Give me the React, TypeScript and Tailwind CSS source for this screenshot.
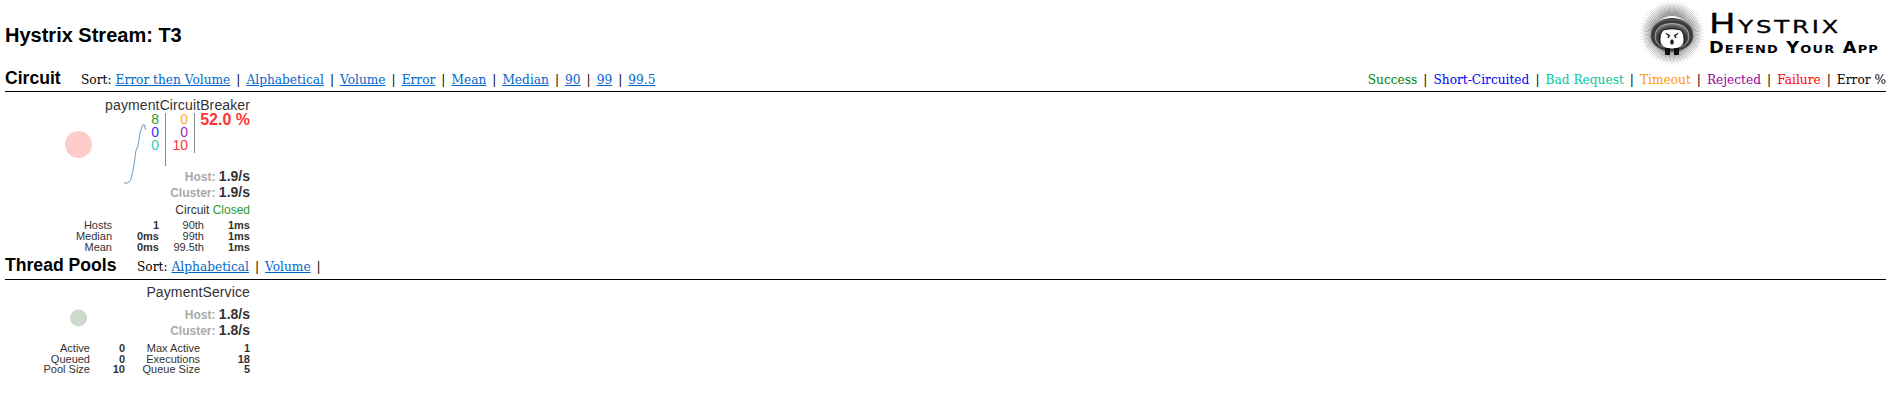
import React from "react";

const sans = "font-['Liberation_Sans',Arial,sans-serif]";
const serif = "font-['DejaVu_Serif',serif]";

function Logo() {
  const spikes = Array.from({ length: 120 }, (_, i) => {
    const a = (i / 120) * Math.PI * 2;
    const r2 = i % 2 === 0 ? 32.5 : 29;
    return { x1: 33 + Math.cos(a) * 17, y1: 33 + Math.sin(a) * 17, x2: 33 + Math.cos(a) * r2, y2: 33 + Math.sin(a) * r2 };
  });
  return (
    <svg width="66" height="66" viewBox="0 0 66 66" className="shrink-0">
      <defs>
        <radialGradient id="spk" gradientUnits="userSpaceOnUse" cx="33" cy="33" r="33">
          <stop offset="0.6" stopColor="#444" />
          <stop offset="1" stopColor="#eee" />
        </radialGradient>
        <radialGradient id="band" cx="0.5" cy="0.6" r="0.6">
          <stop offset="0.6" stopColor="#222" />
          <stop offset="1" stopColor="#888" />
        </radialGradient>
      </defs>
      {spikes.map((s, i) => (
        <line key={i} x1={s.x1} y1={s.y1} x2={s.x2} y2={s.y2} stroke="url(#spk)" strokeWidth="0.6" />
      ))}
      <ellipse cx="33" cy="35" rx="21" ry="17" fill="#444" />
      <path d="M12 36C12 25 21 20 33 20S54 25 54 36C54 44 46 51 33 51S12 44 12 36z" fill="#3a3a3a" stroke="#666" strokeWidth="0.8" />
      <path d="M16 37C16 28 23 23.500 33 23.500S50 28 50 37C50 43 44 48.500 33 48.500S16 43 16 37z" fill="url(#band)" stroke="#ddd" strokeWidth="0.6" />
      <path d="M21 40C21 34 23 31 25 30C29 28.500 37 28.500 41 30C43 31 45 34 45 40C45 46 40 49 33 49S21 46 21 40z" fill="#fff" stroke="#111" strokeWidth="0.8" />
      <path d="M27 33.500L31 36M39 33.500L35 36" stroke="#111" strokeWidth="1.400" />
      <circle cx="29.500" cy="37" r="0.900" fill="#111" />
      <circle cx="36.500" cy="37" r="0.900" fill="#111" />
      <ellipse cx="33" cy="42" rx="1.800" ry="2.800" fill="#222" />
      <rect x="26" y="48" width="5" height="7" fill="#111" />
      <rect x="35" y="48" width="5" height="7" fill="#111" />
    </svg>
  );
}

function Sep() {
  return <span className="mx-[6px]">|</span>;
}

function Link({ children }: { children: React.ReactNode }) {
  return <a className="text-[#0066cc] underline">{children}</a>;
}

function Stat({ cols, rows, lh }: { cols: string; rows: string[][]; lh: string }) {
  return (
    <div className={`grid ${cols} ${lh} text-[11px] text-[#333] text-right`}>
      {rows.flat().map((c, i) => (
        <div key={i} className={i % 2 === 1 ? "font-bold" : ""}>
          {c}
        </div>
      ))}
    </div>
  );
}

function Rate({ label, value }: { label: string; value: string }) {
  return (
    <div className="h-[16px] leading-[17px] text-right whitespace-nowrap">
      <span className="text-[12px] font-bold text-[#aaaaaa]">{label}: </span>
      <span className="text-[14px] font-bold text-[#333]">{value}</span>
    </div>
  );
}

export default function App() {
  const sorts = ["Error then Volume", "Alphabetical", "Volume", "Error", "Mean", "Median", "90", "99", "99.5"];
  const legend = [
    ["Success", "text-[#008000]"],
    ["Short-Circuited", "text-[#0000ff]"],
    ["Bad Request", "text-[#00c8a0]"],
    ["Timeout", "text-[#ff9900]"],
    ["Rejected", "text-[#990099]"],
    ["Failure", "text-[#ff0000]"],
    ["Error %", "text-black"],
  ];
  return (
    <div className={`${sans} bg-white text-black w-[1902px] h-[410px] overflow-hidden pl-[5px] pr-[16px]`}>
      <div className="flex justify-between h-[65px]">
        <h1 className="text-[20px] font-bold pt-[24px] leading-[23px]">Hystrix Stream: T3</h1>
        <div className="flex items-start">
          <Logo />
          <div className="w-[177px] ml-[4px] pt-[11px] text-black font-['DejaVu_Sans',sans-serif] whitespace-nowrap">
            <div className="leading-[26px] text-[26px] tracking-[2px] [font-variant:small-caps] [-webkit-text-stroke:0.3px_black] origin-left scale-x-[1.36]">Hystrix</div>
            <div className="leading-[18px] mt-[2px] text-[15px] tracking-[1px] [font-variant:small-caps] font-semibold origin-left scale-x-[1.18]">Defend Your App</div>
          </div>
        </div>
      </div>

      <div className="flex justify-between items-end h-[27px] border-b border-black pb-[2px]">
        <div className="flex items-end">
          <span className="text-[17.600px] font-bold leading-[22px] w-[76px]">Circuit</span>
          <div className={`${serif} text-[12.200px] leading-[18px] whitespace-nowrap`}>
            <span className="mr-[4px]">Sort:</span>
            {sorts.map((s, i) => (
              <span key={s}>
                <Link>{s}</Link>
                {i < sorts.length - 1 && <Sep />}
              </span>
            ))}
          </div>
        </div>
        <div className={`${serif} text-[12.200px] leading-[18px] whitespace-nowrap`}>
          {legend.map(([t, c], i) => (
            <span key={t}>
              <span className={c}>{t}</span>
              {i < legend.length - 1 && <Sep />}
            </span>
          ))}
        </div>
      </div>

      <div className="w-[245px] h-[164px] pt-[5px]">
        <div className="text-[14px] tracking-[0.12px] leading-[16px] text-right text-[#333] whitespace-nowrap">paymentCircuitBreaker</div>
        <div className="flex">
          <svg width="145" height="95" viewBox="5 113 145 95" className="shrink-0">
            <circle cx="78.500" cy="144.500" r="13.500" fill="#ffcccc" />
            <path d="M124 183L128 183Q130.500 181 131.700 177L134 165L136 150.500L138 146L140 133L142.500 125L144.500 125L145.500 130" fill="none" stroke="#6a9cc4" strokeWidth="1" />
          </svg>
          <div className="flex-1 min-w-0">
            <div className="flex h-[53px] text-[14px] leading-[13px] text-right">
              <div className="w-[9px]">
                <div className="text-[#339933]">8</div>
                <div className="text-[#3333ff]">0</div>
                <div className="text-[#33ccaa]">0</div>
              </div>
              <div className="w-px bg-[#888] ml-[6px] h-[53px]" />
              <div className="w-[22px]">
                <div className="text-[#ffaa33]">0</div>
                <div className="text-[#9933aa]">0</div>
                <div className="text-[#ff3333]">10</div>
              </div>
              <div className="w-px bg-[#888] ml-[6px] h-[40px]" />
              <div className="flex-1 text-[16px] leading-[13px] font-bold text-[#ff3333] whitespace-nowrap">52.0 %</div>
            </div>
            <div className="mt-[1px]">
              <Rate label="Host" value="1.9/s" />
              <Rate label="Cluster" value="1.9/s" />
            </div>
            <div className="mt-[3px] h-[18px] text-[12px] leading-[17px] text-right text-[#333] whitespace-nowrap">
              Circuit <span className="text-[#339933]">Closed</span>
            </div>
          </div>
        </div>
        <Stat
          lh="leading-[11px]"
          cols="grid-cols-[107px_47px_45px_46px]"
          rows={[
            ["Hosts", "1", "90th", "1ms"],
            ["Median", "0ms", "99th", "1ms"],
            ["Mean", "0ms", "99.5th", "1ms"],
          ]}
        />
      </div>

      <div className="flex items-end h-[24px] border-b border-black pb-[3px]">
        <span className="text-[17.600px] font-bold leading-[22px] w-[132px]">Thread Pools</span>
        <div className={`${serif} text-[12.200px] leading-[18px] whitespace-nowrap`}>
          <span className="mr-[4px]">Sort:</span>
          <Link>Alphabetical</Link>
          <Sep />
          <Link>Volume</Link>
          <Sep />
        </div>
      </div>

      <div className="w-[245px] pt-[4px]">
        <div className="text-[14px] tracking-[0.12px] leading-[16px] text-right text-[#333] whitespace-nowrap">PaymentService</div>
        <div className="flex mt-[5px]">
          <svg width="145" height="38" viewBox="5 305 145 38" className="shrink-0">
            <circle cx="78.500" cy="318" r="8.500" fill="#ccd9cc" />
          </svg>
          <div className="flex-1 min-w-0">
            <Rate label="Host" value="1.8/s" />
            <Rate label="Cluster" value="1.8/s" />
          </div>
        </div>
        <Stat
          lh="leading-[10.500px]"
          cols="grid-cols-[85px_35px_75px_50px]"
          rows={[
            ["Active", "0", "Max Active", "1"],
            ["Queued", "0", "Executions", "18"],
            ["Pool Size", "10", "Queue Size", "5"],
          ]}
        />
      </div>
    </div>
  );
}
